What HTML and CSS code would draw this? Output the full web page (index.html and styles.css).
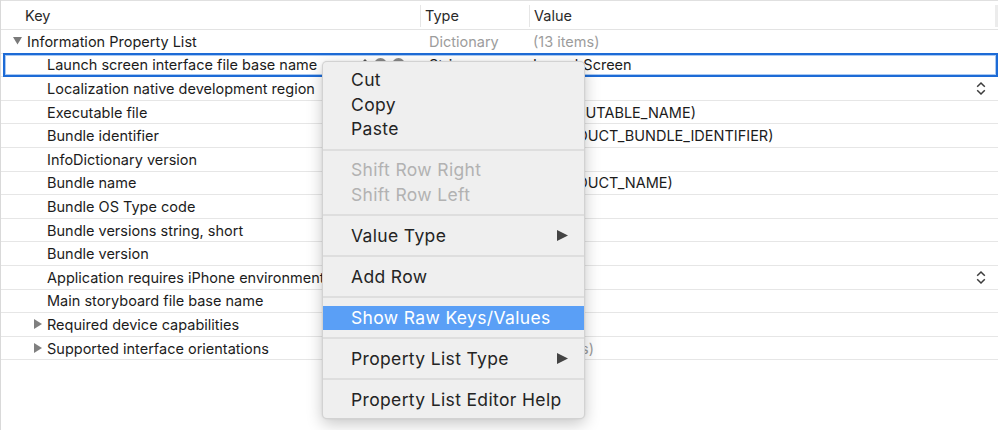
FILE: index.html
```html
<!DOCTYPE html>
<html>
<head>
<meta charset="utf-8">
<link rel="stylesheet" href="styles.css">
</head>
<body>
<div class="plist">
  <div class="header">
    <div class="hcell">Key</div>
    <div class="hcell sep">Type</div>
    <div class="hcell sep">Value</div>
    <div class="hend"></div>
  </div>

  <div class="row">
    <div class="key lvl0"><svg class="tri" width="9" height="8" viewBox="0 0 9 8"><polygon points="0,0 9,0 4.5,7.5" fill="#7a7a7a"/></svg>Information Property List</div>
    <div class="type dim">Dictionary</div>
    <div class="val dim">(13 items)</div>
  </div>

  <div class="row selected">
    <div class="key lvl1"><span class="ktext">Launch screen interface file base name</span>
      <span class="rowtools">
        <svg width="8" height="14" viewBox="0 0 8 14"><path d="M1 5 L4 2 L7 5 M1 9 L4 12 L7 9" stroke="#555" stroke-width="1.4" fill="none"/></svg>
        <span class="circ"></span><span class="circ"></span>
      </span>
    </div>
    <div class="type"><span>String</span><svg width="8" height="14" viewBox="0 0 8 14"><path d="M1 5 L4 2 L7 5 M1 9 L4 12 L7 9" stroke="#555" stroke-width="1.4" fill="none"/></svg></div>
    <div class="val">LaunchScreen</div>
  </div>

  <div class="row">
    <div class="key lvl1">Localization native development region</div>
    <div class="type"></div>
    <div class="val"><span></span><svg class="chev" width="10" height="15" viewBox="0 0 10 15"><path d="M1.2 5.8 L5 2 L8.8 5.8 M1.2 9.2 L5 13 L8.8 9.2" stroke="#3c3c3c" stroke-width="1.5" fill="none"/></svg></div>
  </div>

  <div class="row">
    <div class="key lvl1">Executable file</div>
    <div class="type"></div>
    <div class="val">$(EXECUTABLE_NAME)</div>
  </div>

  <div class="row">
    <div class="key lvl1">Bundle identifier</div>
    <div class="type"></div>
    <div class="val">$(PRODUCT_BUNDLE_IDENTIFIER)</div>
  </div>

  <div class="row">
    <div class="key lvl1">InfoDictionary version</div>
    <div class="type"></div>
    <div class="val"></div>
  </div>

  <div class="row">
    <div class="key lvl1">Bundle name</div>
    <div class="type"></div>
    <div class="val">$(PRODUCT_NAME)</div>
  </div>

  <div class="row">
    <div class="key lvl1">Bundle OS Type code</div>
    <div class="type"></div>
    <div class="val"></div>
  </div>

  <div class="row">
    <div class="key lvl1">Bundle versions string, short</div>
    <div class="type"></div>
    <div class="val"></div>
  </div>

  <div class="row">
    <div class="key lvl1">Bundle version</div>
    <div class="type"></div>
    <div class="val"></div>
  </div>

  <div class="row">
    <div class="key lvl1">Application requires iPhone environment</div>
    <div class="type"></div>
    <div class="val"><span></span><svg class="chev" width="10" height="15" viewBox="0 0 10 15"><path d="M1.2 5.8 L5 2 L8.8 5.8 M1.2 9.2 L5 13 L8.8 9.2" stroke="#3c3c3c" stroke-width="1.5" fill="none"/></svg></div>
  </div>

  <div class="row">
    <div class="key lvl1">Main storyboard file base name</div>
    <div class="type"></div>
    <div class="val"></div>
  </div>

  <div class="row">
    <div class="key lvl1 haschild"><svg class="tri" width="8" height="10" viewBox="0 0 8 10"><polygon points="0,0 8,5 0,10" fill="#808080"/></svg>Required device capabilities</div>
    <div class="type"></div>
    <div class="val"></div>
  </div>

  <div class="row">
    <div class="key lvl1 haschild"><svg class="tri" width="8" height="10" viewBox="0 0 8 10"><polygon points="0,0 8,5 0,10" fill="#808080"/></svg>Supported interface orientations</div>
    <div class="type"></div>
    <div class="val dim">(4 items)</div>
  </div>
</div>

<div class="menu">
  <div class="item">Cut</div>
  <div class="item">Copy</div>
  <div class="item">Paste</div>
  <div class="msep"></div>
  <div class="item disabled">Shift Row Right</div>
  <div class="item disabled">Shift Row Left</div>
  <div class="msep"></div>
  <div class="item"><span>Value Type</span><svg width="11" height="11" viewBox="0 0 11 11"><polygon points="0,0 11,5.5 0,11" fill="#444"/></svg></div>
  <div class="msep"></div>
  <div class="item">Add Row</div>
  <div class="msep"></div>
  <div class="item active">Show Raw Keys/Values</div>
  <div class="msep"></div>
  <div class="item"><span>Property List Type</span><svg width="11" height="11" viewBox="0 0 11 11"><polygon points="0,0 11,5.5 0,11" fill="#444"/></svg></div>
  <div class="msep"></div>
  <div class="item">Property List Editor Help</div>
</div>
</body>
</html>
```

FILE: styles.css
```css
html, body {
  margin: 0;
  padding: 0;
  background: #ffffff;
}

body {
  width: 1000px;
  height: 430px;
  overflow: hidden;
  position: relative;
  font-family: Inter, "Liberation Sans", sans-serif;
  color: #1c1c1c;
}

.plist {
  width: 998px;
  height: 430px;
  border-left: 1px solid #d9d9d9;
  box-sizing: border-box;
  font-size: 14.5px;
}

.header {
  display: grid;
  grid-template-columns: 419px 109px 1fr 3px;
  align-items: center;
  height: 30px;
  box-sizing: border-box;
  border-top: 1px solid #e0e0e0;
  border-bottom: 1px solid #e3e3e3;
  color: #2a2a2a;
}

.hcell {
  height: 22px;
  line-height: 22px;
  padding-left: 24px;
  margin-top: 1px;
}

.hcell.sep {
  border-left: 1px solid #e6e6e6;
  padding-left: 4px;
}

.hend {
  height: 22px;
  background: #ececec;
  margin-top: 1px;
}

.row {
  display: grid;
  grid-template-columns: 419px 109px 1fr;
  align-items: center;
  height: 23.6px;
  box-sizing: border-box;
  border-bottom: 1px solid #e6e6e6;
  position: relative;
  white-space: nowrap;
}

.key {
  display: flex;
  align-items: center;
  overflow: hidden;
}

.lvl0 {
  padding-left: 12px;
}

.lvl0 .tri {
  margin-right: 5px;
}

.lvl1 {
  padding-left: 46px;
}

.lvl1.haschild {
  padding-left: 33px;
}

.lvl1.haschild .tri {
  margin-right: 5px;
}

.type {
  padding-left: 9px;
  display: flex;
  align-items: center;
  gap: 70px;
  min-height: 1px;
}

.val {
  padding-left: 4px;
  display: flex;
  align-items: center;
  justify-content: space-between;
  padding-right: 12px;
  min-height: 1px;
}

.dim {
  color: #9c9c9c;
}

.selected::after {
  content: "";
  position: absolute;
  left: 2px;
  right: 0;
  top: -1px;
  bottom: -1px;
  border: 2px solid #1d6bd6;
  box-shadow: inset 0 0 0 1px #a9c9f3;
  pointer-events: none;
}

.rowtools {
  display: flex;
  align-items: center;
  gap: 5px;
  margin-left: 44px;
}

.circ {
  width: 13px;
  height: 13px;
  border-radius: 50%;
  background: #8a8a8a;
}

.menu {
  position: absolute;
  left: 322px;
  top: 61px;
  width: 263px;
  padding: 6px 0;
  box-sizing: border-box;
  background: #efefef;
  border-radius: 5px;
  border: 1px solid rgba(0, 0, 0, 0.12);
  box-shadow: 0 5px 16px rgba(0, 0, 0, 0.22), 0 0 2px rgba(0, 0, 0, 0.1);
  font-size: 17.5px;
  letter-spacing: 0.35px;
  color: #242424;
}

.item {
  height: 24.5px;
  line-height: 24.5px;
  padding: 0 16px 0 28px;
  display: flex;
  align-items: center;
  justify-content: space-between;
}

.item.disabled {
  color: #b2b2b2;
}

.item.active {
  background: #5a9ff6;
  color: #ffffff;
}

.msep {
  height: 2px;
  margin: 7.25px 0;
  background: #dedede;
}
```
